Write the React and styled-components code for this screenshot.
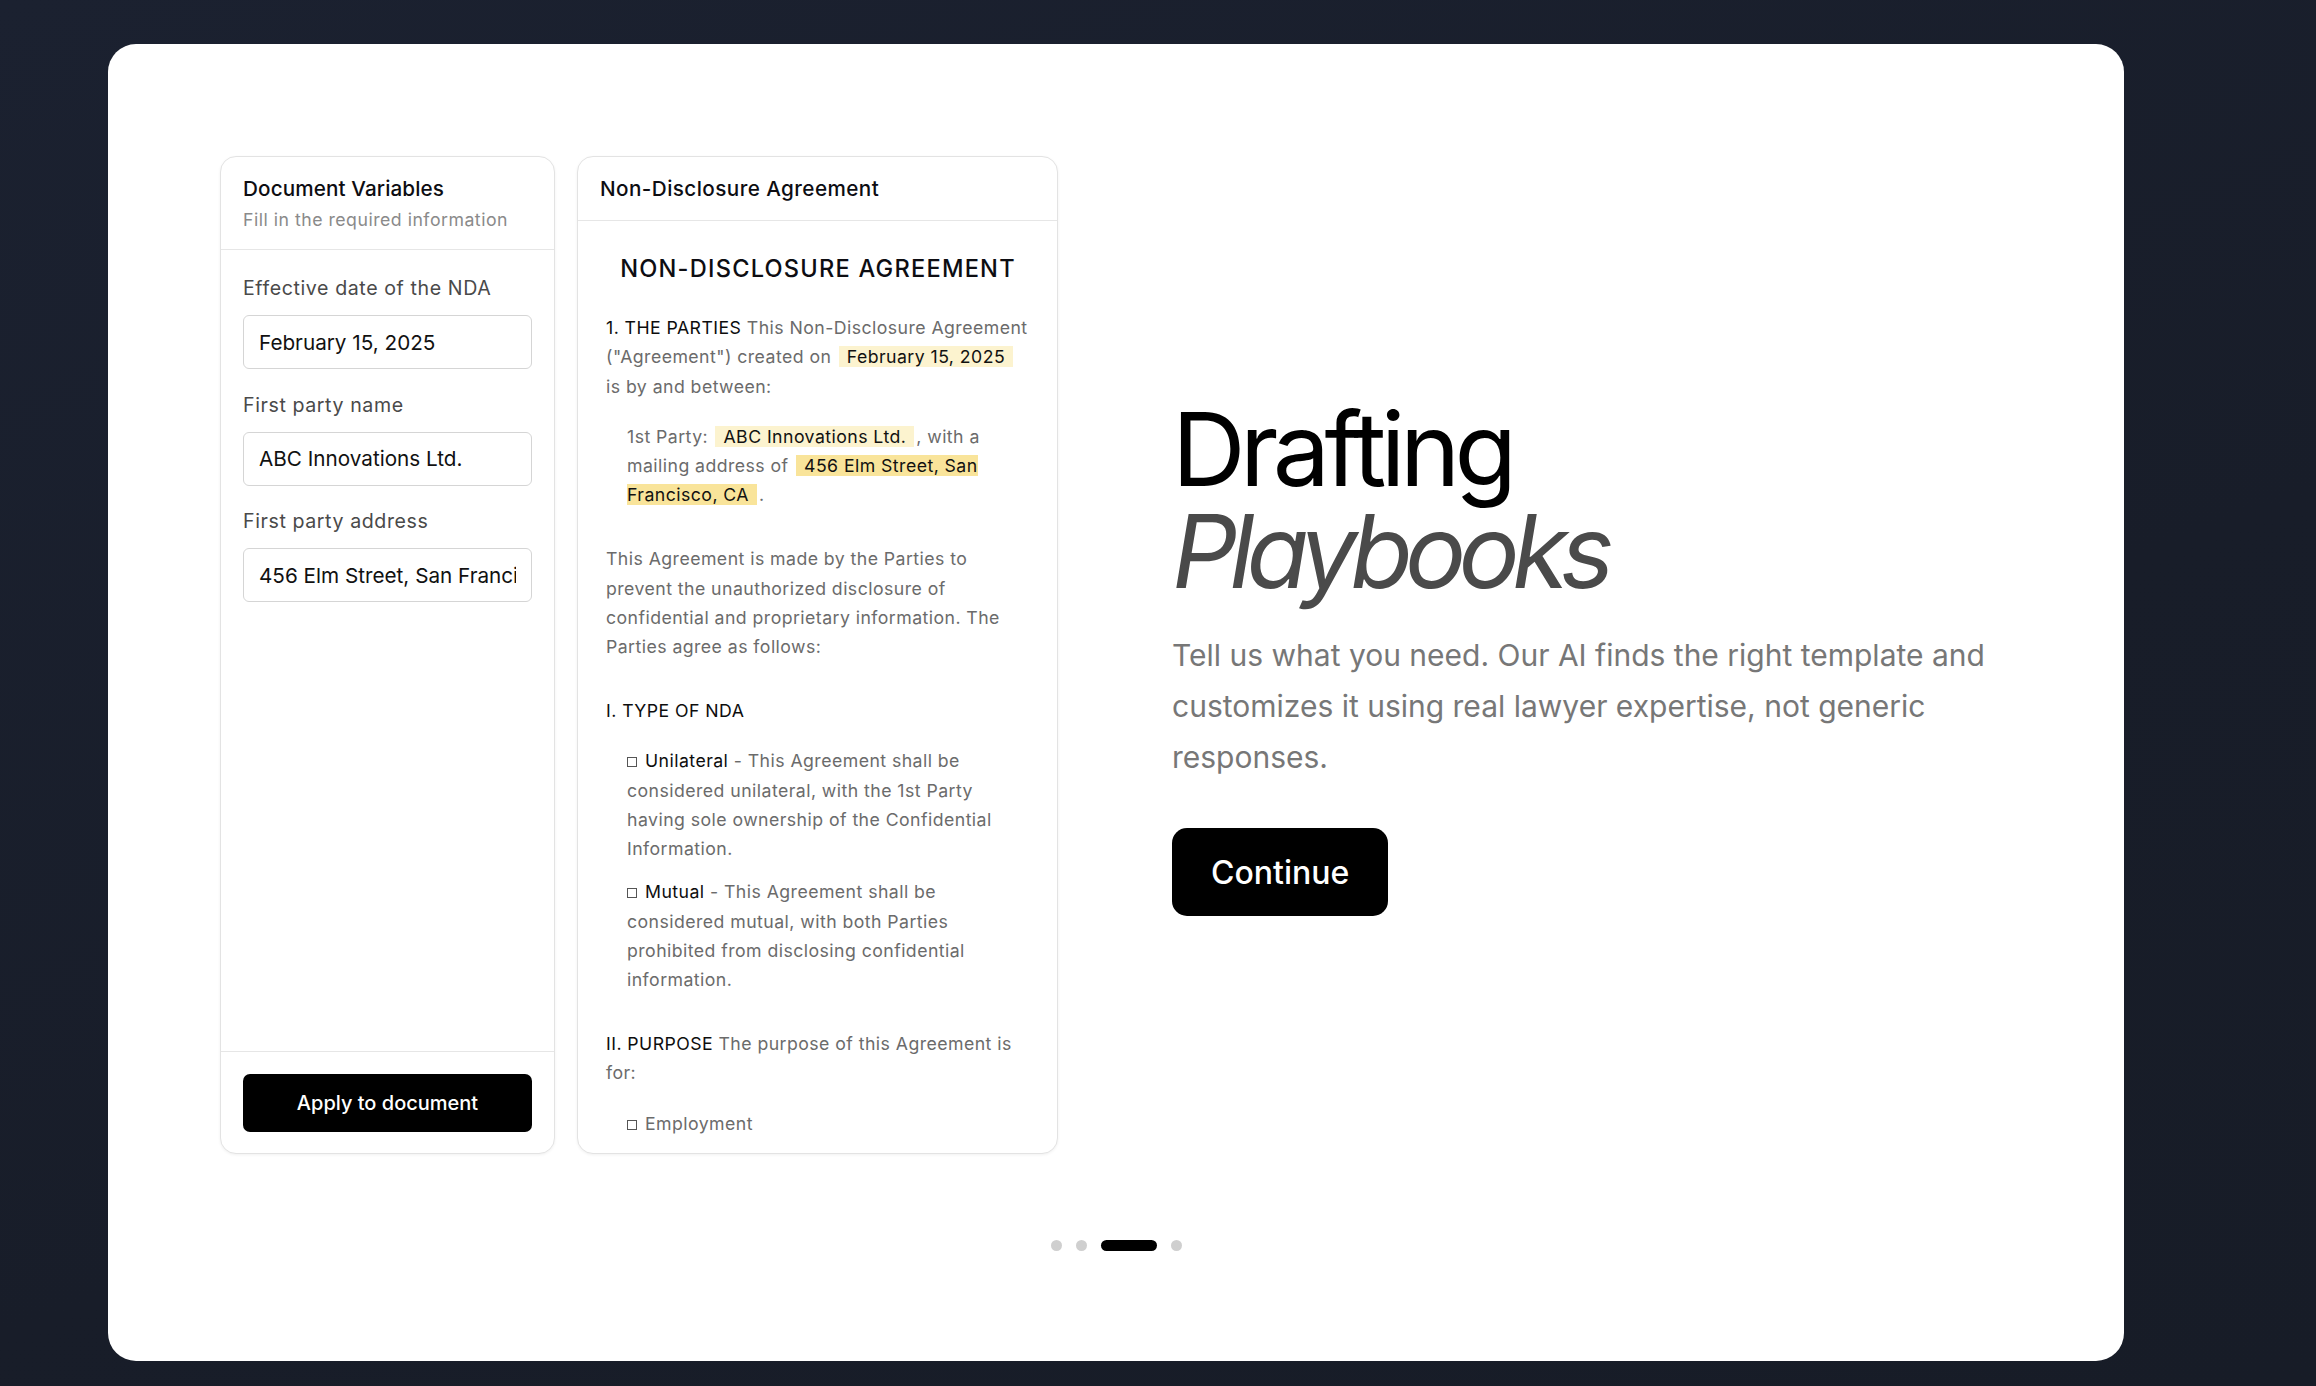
import React from "react"
import styled, { createGlobalStyle } from "styled-components"

const GlobalStyle = createGlobalStyle`
  html, body {
    margin: 0;
    padding: 0;
    background: linear-gradient(160deg, #1b2130 0%, #181d29 60%, #171c27 100%);
    font-family: Inter, "Noto Sans", "Liberation Sans", sans-serif;
    -webkit-font-smoothing: antialiased;
  }
  * {
    box-sizing: border-box;
  }
`

const fields = [
  { label: "Effective date of the NDA", value: "February 15, 2025" },
  { label: "First party name", value: "ABC Innovations Ltd." },
  { label: "First party address", value: "456 Elm Street, San Francisco, CA" },
]

function App() {
  return (
    <Page>
      <GlobalStyle />
      <Card>
        <Row>
          <Panels>
            <VarsPanel>
              <PanelHeader>
                <PanelTitle>Document Variables</PanelTitle>
                <PanelSub>Fill in the required information</PanelSub>
              </PanelHeader>
              <FieldList>
                {fields.map((f) => (
                  <Field key={f.label}>
                    <Label>{f.label}</Label>
                    <Input value={f.value} readOnly />
                  </Field>
                ))}
              </FieldList>
              <PanelFooter>
                <ApplyButton>Apply to document</ApplyButton>
              </PanelFooter>
            </VarsPanel>

            <DocPanel>
              <PanelHeader>
                <PanelTitle $wide>Non-Disclosure Agreement</PanelTitle>
              </PanelHeader>
              <DocBody>
                <DocTitle>NON-DISCLOSURE AGREEMENT</DocTitle>
                <Section>
                  <P>
                    <Term>1. THE PARTIES</Term> This Non-Disclosure Agreement
                    ("Agreement") created on <Var>February 15, 2025</Var> is by
                    and between:
                  </P>
                  <Indent>
                    <P>
                      1st Party: <Var>ABC Innovations Ltd.</Var>, with a
                      mailing address of{" "}
                      <Var $active>456 Elm Street, San Francisco, CA</Var>.
                    </P>
                  </Indent>
                </Section>
                <Section>
                  <P>
                    This Agreement is made by the Parties to prevent the
                    unauthorized disclosure of confidential and proprietary
                    information. The Parties agree as follows:
                  </P>
                </Section>
                <Section>
                  <P>
                    <Term>I. TYPE OF NDA</Term>
                  </P>
                  <Indent>
                    <P>
                      <Box />
                      <Term>Unilateral</Term> - This Agreement shall be
                      considered unilateral, with the 1st Party having sole
                      ownership of the Confidential Information.
                    </P>
                    <P>
                      <Box />
                      <Term>Mutual</Term> - This Agreement shall be considered
                      mutual, with both Parties prohibited from disclosing
                      confidential information.
                    </P>
                  </Indent>
                </Section>
                <Section>
                  <P>
                    <Term>II. PURPOSE</Term> The purpose of this Agreement is
                    for:
                  </P>
                  <Indent>
                    <P>
                      <Box />
                      Employment
                    </P>
                    <P>
                      <Box />
                      Business relationship
                    </P>
                  </Indent>
                </Section>
              </DocBody>
            </DocPanel>
          </Panels>

          <Intro>
            <Heading>
              <span>Drafting</span>
              <em>Playbooks</em>
            </Heading>
            <Lead>
              Tell us what you need. Our AI finds the right template and
              customizes it using real lawyer expertise, not generic responses.
            </Lead>
            <ContinueButton>Continue</ContinueButton>
          </Intro>
        </Row>

        <Dots>
          <Dot />
          <Dot />
          <Dot $active />
          <Dot />
        </Dots>
      </Card>
    </Page>
  )
}

export default App

const Page = styled.div`
  min-height: 1386px;
  padding: 44px 0 0 108px;
`

const Card = styled.div`
  width: 2016px;
  height: 1317px;
  background: #ffffff;
  border-radius: 28px;
  padding: 112px 112px 0;
  display: flex;
  flex-direction: column;
`

const Row = styled.div`
  display: grid;
  grid-template-columns: 838px 838px;
  grid-template-rows: 998px;
  column-gap: 114px;
`

const Panels = styled.div`
  display: flex;
  gap: 22px;
  height: 998px;
  min-height: 0;
`

const Panel = styled.div`
  background: #fff;
  border: 1.5px solid #e3e3e3;
  border-radius: 16px;
  box-shadow: 0 1px 3px rgba(0, 0, 0, 0.06);
  display: flex;
  flex-direction: column;
  height: 100%;
  min-height: 0;
  overflow: hidden;
`

const VarsPanel = styled(Panel)`
  width: 335px;
`

const DocPanel = styled(Panel)`
  width: 481px;
`

const PanelHeader = styled.div`
  padding: 16px 22px 16px;
  border-bottom: 1.5px solid #e6e6e6;
  flex-shrink: 0;
`

const PanelTitle = styled.div`
  font-size: 20.7px;
  line-height: 31px;
  font-weight: 500;
  letter-spacing: ${(p) => (p.$wide ? "0.02em" : "0.005em")};
  color: #0d0d12;
`

const PanelSub = styled.div`
  font-size: 17.7px;
  line-height: 27px;
  color: #8a8a8a;
  letter-spacing: 0.028em;
  margin-top: 2px;
`

const FieldList = styled.div`
  flex: 1;
  min-height: 0;
  padding: 24px 22px;
  display: flex;
  flex-direction: column;
  gap: 21.5px;
`

const Field = styled.div`
  display: flex;
  flex-direction: column;
  gap: 13px;
`

const Label = styled.label`
  font-size: 19.6px;
  line-height: 28px;
  letter-spacing: 0.03em;
  color: #4a4a4a;
`

const Input = styled.input`
  height: 54px;
  width: 100%;
  border: 1.5px solid #d5d5d5;
  border-radius: 6px;
  padding: 0 15px;
  font-family: inherit;
  font-size: 20.7px;
  color: #111;
  background: #fff;
  outline: none;
`

const PanelFooter = styled.div`
  border-top: 1.5px solid #e6e6e6;
  padding: 22px 22px 21px;
  flex-shrink: 0;
`

const ApplyButton = styled.button`
  width: 100%;
  height: 58px;
  border: 0;
  border-radius: 7px;
  background: #000;
  color: #fff;
  font-family: inherit;
  font-size: 20px;
  font-weight: 500;
`

const DocBody = styled.div`
  flex: 1;
  min-height: 0;
  overflow: hidden;
  padding: 31px 27px 0 28px;
`

const DocTitle = styled.h2`
  margin: 0 0 28px;
  text-align: center;
  font-size: 23.6px;
  line-height: 33px;
  font-weight: 500;
  letter-spacing: 0.052em;
  color: #0d0d12;
`

const Section = styled.div`
  display: flex;
  flex-direction: column;
  gap: 21px;
  margin-bottom: 34.5px;
`

const P = styled.p`
  margin: 0;
  font-size: 17.7px;
  line-height: 29.3px;
  color: #6b6b6b;
  letter-spacing: 0.025em;
`

const Indent = styled.div`
  padding-left: 21px;
  display: flex;
  flex-direction: column;
  gap: 14px;
`

const Term = styled.span`
  color: #0d0d0d;
`

const Var = styled.span`
  background: ${(p) => (p.$active ? "#f9e49a" : "#fcf3cf")};
  color: #111;
  padding: 0 8px;
  margin: 0 2px;
`

const Box = styled.span`
  display: inline-block;
  width: 10px;
  height: 10px;
  border: 1.2px solid #555;
  margin-right: 8px;
`

const Intro = styled.div`
  display: flex;
  flex-direction: column;
  justify-content: center;
  align-items: flex-start;
  padding-top: 4px;
`

const Heading = styled.h1`
  margin: 0;
  font-size: 102px;
  line-height: 102px;
  font-weight: 400;
  color: #000;

  span {
    display: block;
    letter-spacing: -0.055em;
  }

  em {
    display: block;
    font-style: italic;
    letter-spacing: -0.075em;
    color: #4a4a4a;
  }
`

const Lead = styled.p`
  margin: 28px 0 0;
  font-size: 30px;
  line-height: 51px;
  color: #777;
`

const ContinueButton = styled.button`
  margin-top: 45px;
  height: 88px;
  padding: 0 39px;
  border: 0;
  border-radius: 15px;
  background: #000;
  color: #fff;
  font-family: inherit;
  font-size: 32px;
  font-weight: 500;
`

const Dots = styled.div`
  margin-top: 86px;
  display: flex;
  justify-content: center;
  align-items: center;
  gap: 14px;
`

const Dot = styled.span`
  width: ${(p) => (p.$active ? "56px" : "11px")};
  height: 11px;
  border-radius: 6px;
  background: ${(p) => (p.$active ? "#000" : "#cfcfcf")};
`
